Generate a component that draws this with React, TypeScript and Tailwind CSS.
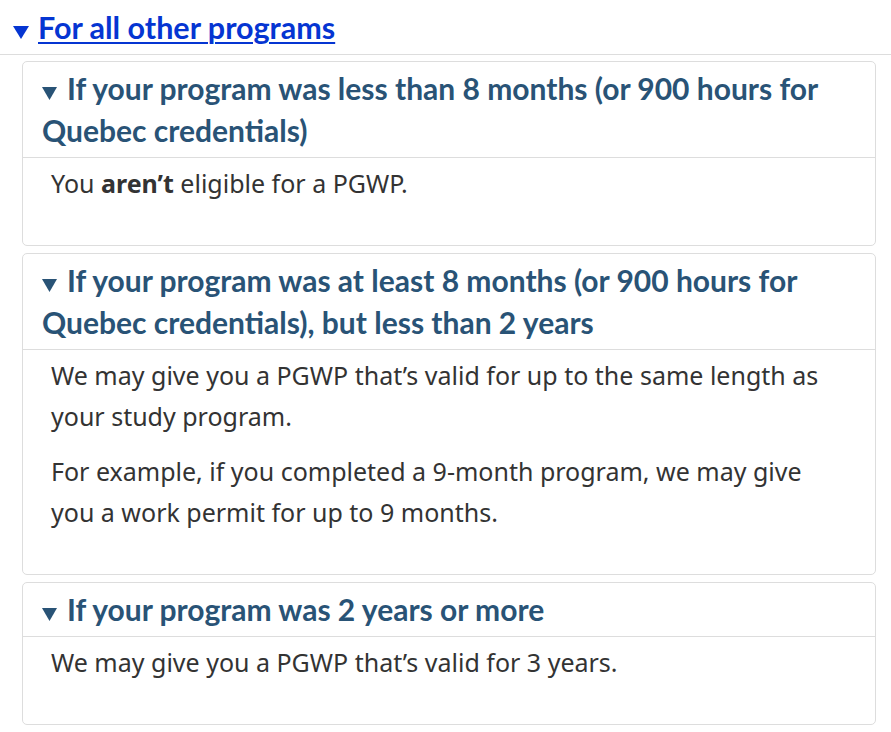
import React from "react";

const sections = [
  {
    title: "If your program was less than 8 months (or 900 hours for Quebec credentials)",
    body: [
      <>
        You <strong className="font-bold">aren’t</strong> eligible for a PGWP.
      </>,
    ],
  },
  {
    title:
      "If your program was at least 8 months (or 900 hours for Quebec credentials), but less than 2 years",
    body: [
      <>We may give you a PGWP that’s valid for up to the same length as your study program.</>,
      <>For example, if you completed a 9-month program, we may give you a work permit for up to 9 months.</>,
    ],
  },
  {
    title: "If your program was 2 years or more",
    body: [<>We may give you a PGWP that’s valid for 3 years.</>],
  },
];

function Caret({ color, w, h }: { color: string; w: number; h: number }) {
  return (
    <svg width={w} height={h} viewBox={`0 0 ${w} ${h}`} className="inline-block align-baseline">
      <polygon points={`0,0 ${w},0 ${w / 2},${h}`} fill={color} />
    </svg>
  );
}

export default function App() {
  return (
    <div className="w-[891px] h-[732px] overflow-hidden bg-white">
      {/* Outer summary */}
      <div className="px-[13px] py-[6px] border-b border-[#dddddd] font-['Lato',sans-serif] font-bold text-[30.5px] leading-[42px]">
        <span className="mr-[9px]">
          <Caret color="#0535d2" w={16} h={13} />
        </span>
        <a href="#" className="text-[#0535d2] underline decoration-2 underline-offset-[3px]">
          For all other programs
        </a>
      </div>

      {/* Nested details */}
      <div className="pl-[22px] pr-[15px] pt-[6px] flex flex-col gap-[7px]">
        {sections.map((s) => (
          <div key={s.title} className="border border-[#dddddd] rounded-[5px]">
            <div className="px-[19px] pt-[5px] pb-[6px] border-b border-[#dddddd]">
              <h3 className="font-['Lato',sans-serif] font-bold text-[30px] leading-[42px] text-[#295376]">
                <span className="mr-[10px]">
                  <Caret color="#295376" w={15} h={13} />
                </span>
                {s.title}
              </h3>
            </div>
            <div className="pl-[28px] pr-[40px] pt-[5px] pb-[27px] font-['Noto_Sans',sans-serif] text-[25px] leading-[41px] text-[#333333]">
              {s.body.map((p, i) => (
                <p key={i} className="mb-[14px]">
                  {p}
                </p>
              ))}
            </div>
          </div>
        ))}
      </div>
    </div>
  );
}
